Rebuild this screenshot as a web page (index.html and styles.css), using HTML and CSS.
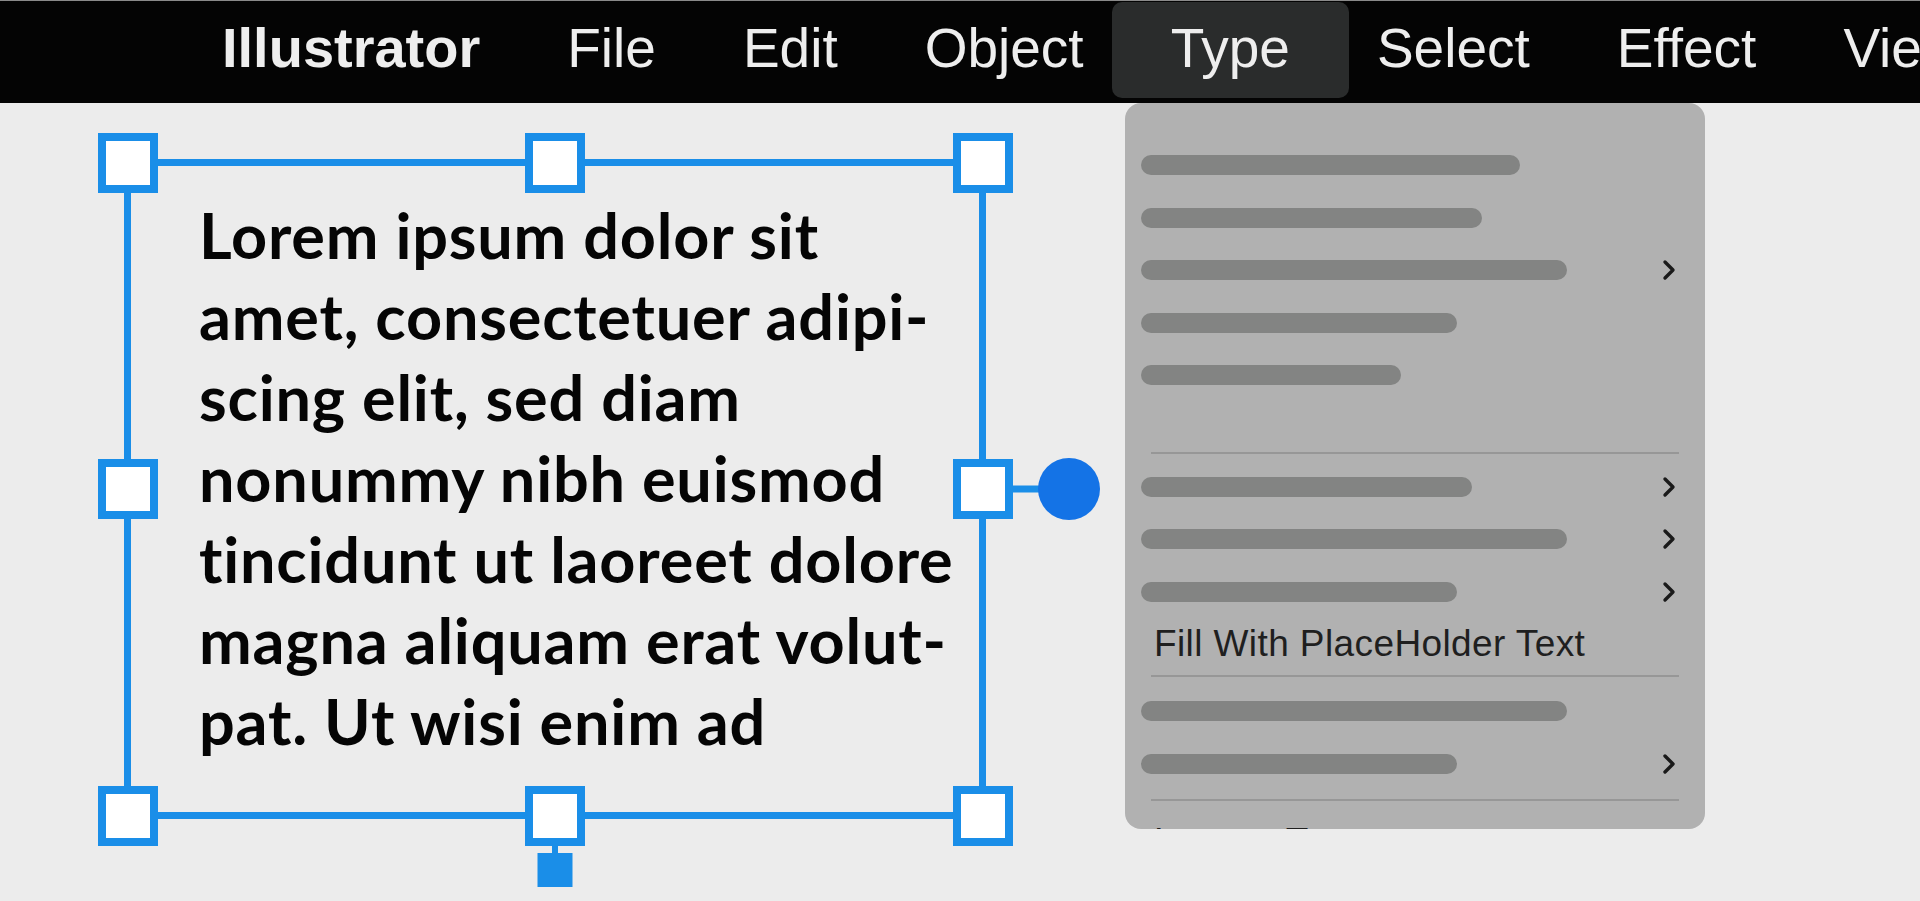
FILE: index.html
```html
<!DOCTYPE html>
<html lang="en">
<head>
  <meta charset="UTF-8" />
  <title>Illustrator - Type menu</title>
  <link rel="stylesheet" href="styles.css">
</head>
<body>
  <header class="menubar">
    <span class="menu-item app-name">Illustrator</span>
    <span class="menu-item">File</span>
    <span class="menu-item">Edit</span>
    <span class="menu-item">Object</span>
    <span class="menu-item is-open">Type</span>
    <span class="menu-item">Select</span>
    <span class="menu-item">Effect</span>
    <span class="menu-item">View</span>
  </header>

  <main class="canvas">
    <div class="frame">
      <p class="frame-text">Lorem ipsum dolor sit<br>amet, consectetuer adipi-<br>scing elit, sed diam<br>nonummy nibh euismod<br>tincidunt ut laoreet dolore<br>magna aliquam erat volut-<br>pat. Ut wisi enim ad</p>

      <!-- liens vers les poignées -->
      <span class="dot-line"></span>
      <span class="stub-line"></span>

      <span class="handle tl"></span>
      <span class="handle tc"></span>
      <span class="handle tr"></span>
      <span class="handle ml"></span>
      <span class="handle mr"></span>
      <span class="handle bl"></span>
      <span class="handle bc"></span>
      <span class="handle br"></span>

      <span class="dot"></span>
      <span class="stub"></span>
    </div>

    <div class="dropdown">
      <div class="row"><span class="bar lg"></span></div>
      <div class="row"><span class="bar md"></span></div>
      <div class="row"><span class="bar xl"></span><svg class="chev" viewBox="0 0 14 22"><polyline points="3,3 11,11 3,19" /></svg></div>
      <div class="row"><span class="bar sm"></span></div>
      <div class="row"><span class="bar xs"></span></div>
      <div class="spacer"></div>

      <div class="sep"></div>
      <div class="row"><span class="bar md2"></span><svg class="chev" viewBox="0 0 14 22"><polyline points="3,3 11,11 3,19" /></svg></div>
      <div class="row"><span class="bar xl"></span><svg class="chev" viewBox="0 0 14 22"><polyline points="3,3 11,11 3,19" /></svg></div>
      <div class="row"><span class="bar sm"></span><svg class="chev" viewBox="0 0 14 22"><polyline points="3,3 11,11 3,19" /></svg></div>
      <div class="label">Fill With PlaceHolder Text</div>

      <div class="sep sep-mid"></div>
      <div class="row"><span class="bar xl"></span></div>
      <div class="row"><span class="bar sm"></span><svg class="chev" viewBox="0 0 14 22"><polyline points="3,3 11,11 3,19" /></svg></div>

      <div class="sep sep-last"></div>
      <div class="label label-cut">Legacy Text<svg class="chev" viewBox="0 0 14 22"><polyline points="3,3 11,11 3,19" /></svg></div>
    </div>
  </main>
</body>
</html>
```

FILE: styles.css
```css
body {
  margin: 0;
  background: #ececec;
  font-family: "Liberation Sans", Arial, sans-serif;
  overflow: hidden;
}

/* barre de menu */
.menubar {
  display: flex;
  align-items: flex-start;
  gap: 87px;
  height: 103px;
  box-sizing: border-box;
  padding-left: 222px;
  background: #040404;
  box-shadow: inset 0 1px 0 #8a8a8a;
  overflow: hidden;
  white-space: nowrap;
}

.menu-item {
  margin-top: 2px;
  padding-bottom: 4px;
  font-size: 55px;
  line-height: 92px;
  color: #eeeeee;
}

.app-name {
  font-size: 56px;
  font-weight: bold;
}

.menu-item.is-open {
  padding-left: 59px;
  padding-right: 59px;
  margin-left: -59px;
  margin-right: -59px;
  background: #2a2c2c;
  border-radius: 10px;
}

/* zone de travail */
.canvas {
  position: relative;
  height: 798px;
  padding: 56px 0 0 124px;
  box-sizing: border-box;
}

.frame {
  position: relative;
  width: 862px;
  height: 660px;
  box-sizing: border-box;
  border: 7px solid #1a8ee8;
}

.frame-text {
  margin: 0;
  padding: 28px 0 0 68px;
  font-family: Lato, "Open Sans", sans-serif;
  font-weight: bold;
  font-size: 63px;
  line-height: 81px;
  letter-spacing: 0.8px;
  color: #050505;
  white-space: nowrap;
}

.handle {
  position: absolute;
  width: 60px;
  height: 60px;
  box-sizing: border-box;
  border: 8px solid #1a8ee8;
  background: #fff;
  transform: translate(-50%, -50%);
}

.tl, .tc, .tr { top: -3.5px; }
.ml, .mr { top: 50%; }
.bl, .bc, .br { top: calc(100% + 3.5px); }
.tl, .ml, .bl { left: -3.5px; }
.tc, .bc { left: 50%; }
.tr, .mr, .br { left: calc(100% + 3.5px); }

.dot-line {
  position: absolute;
  left: calc(100% + 3.5px);
  top: 50%;
  width: 86px;
  height: 7px;
  background: #1a8ee8;
  transform: translateY(-50%);
}

.dot {
  position: absolute;
  left: calc(100% + 90px);
  top: 50%;
  width: 62px;
  height: 62px;
  border-radius: 50%;
  background: #1473e6;
  transform: translate(-50%, -50%);
}

.stub-line {
  position: absolute;
  left: 50%;
  top: calc(100% + 3.5px);
  width: 6px;
  height: 50px;
  background: #1a8ee8;
  transform: translateX(-50%);
}

.stub {
  position: absolute;
  left: 50%;
  top: calc(100% + 41px);
  width: 35px;
  height: 34px;
  background: #1a8ee8;
  transform: translateX(-50%);
}

/* menu déroulant "Type" */
.dropdown {
  position: absolute;
  left: 1125px;
  top: 0;
  width: 580px;
  height: 726px;
  box-sizing: border-box;
  padding: 36px 29px 0 16px;
  background: #b1b1b1;
  border-radius: 16px;
  overflow: hidden;
}

.row {
  display: flex;
  align-items: center;
  justify-content: space-between;
  height: 52.5px;
}

.bar {
  height: 20px;
  border-radius: 10px;
  background: #838483;
}

.bar.xl { width: 426px; }
.bar.lg { width: 379px; }
.bar.md { width: 341px; }
.bar.md2 { width: 331px; }
.bar.sm { width: 316px; }
.bar.xs { width: 260px; }

.chev {
  width: 14px;
  height: 22px;
  fill: none;
  stroke: #1a1a1a;
  stroke-width: 3.4;
  stroke-linecap: round;
  stroke-linejoin: round;
}

.spacer {
  height: 50px;
}

.sep {
  height: 2px;
  margin: 0 -3px 7px 10px;
  background: #979797;
}

.sep-mid {
  margin-top: 5px;
  margin-bottom: 8px;
}

.sep-last {
  margin-top: 9px;
  margin-bottom: 0;
}

.label {
  display: flex;
  align-items: center;
  justify-content: space-between;
  height: 52px;
  padding-left: 13px;
  font-size: 37px;
  line-height: 52px;
  letter-spacing: 0.4px;
  color: #1f1f1f;
}

.label-cut {
  margin-top: 15px;
}
```
